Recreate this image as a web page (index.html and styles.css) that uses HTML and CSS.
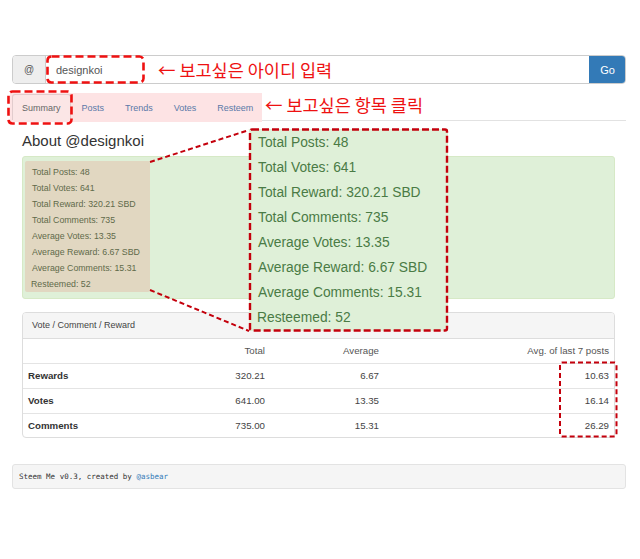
FILE: index.html
```html
<!DOCTYPE html>
<html>
<head>
<meta charset="utf-8">
<link rel="stylesheet" href="styles.css">
</head>
<body>
<div class="page">
  <div class="input-group">
    <span class="addon">@</span>
    <span class="field">designkoi</span>
    <button class="go">Go</button>
  </div>
  <nav class="nav">
    <div class="hl">
      <a class="tab active">Summary</a>
      <a class="tab">Posts</a>
      <a class="tab">Trends</a>
      <a class="tab">Votes</a>
      <a class="tab">Resteem</a>
    </div>
    <div class="rest"></div>
  </nav>
  <div class="inner">
    <h2 class="about">About @designkoi</h2>
    <div class="alert">
      <div class="stats">
        <div>Total Posts: 48</div>
        <div>Total Votes: 641</div>
        <div>Total Reward: 320.21 SBD</div>
        <div>Total Comments: 735</div>
        <div>Average Votes: 13.35</div>
        <div>Average Reward: 6.67 SBD</div>
        <div>Average Comments: 15.31</div>
        <div class="last">Resteemed: 52</div>
      </div>
    </div>
    <div class="panel">
      <div class="panel-heading">Vote / Comment / Reward</div>
      <table class="tbl">
        <colgroup><col class="c1"><col class="c2"><col class="c3"><col></colgroup>
        <thead>
          <tr><th></th><th>Total</th><th>Average</th><th>Avg. of last 7 posts</th></tr>
        </thead>
        <tbody>
          <tr><td class="lbl">Rewards</td><td>320.21</td><td>6.67</td><td>10.63</td></tr>
          <tr><td class="lbl">Votes</td><td>641.00</td><td>13.35</td><td>16.14</td></tr>
          <tr><td class="lbl">Comments</td><td>735.00</td><td>15.31</td><td>26.29</td></tr>
        </tbody>
      </table>
    </div>
  </div>
  <div class="footer">Steem Me v0.3, created by <a class="link">@asbear</a></div>
</div>

<div class="callout">
  <div>Total Posts: 48</div>
  <div>Total Votes: 641</div>
  <div>Total Reward: 320.21 SBD</div>
  <div>Total Comments: 735</div>
  <div>Average Votes: 13.35</div>
  <div>Average Reward: 6.67 SBD</div>
  <div>Average Comments: 15.31</div>
  <div class="cl-last">Resteemed: 52</div>
</div>

<div class="note note1">← 보고싶은 아이디 입력</div>
<div class="note note2">← 보고싶은 항목 클릭</div>

<svg class="overlay" width="640" height="559" viewBox="0 0 640 559">
  <g fill="none" stroke="#ee1111" stroke-width="2.6" stroke-dasharray="8 4">
    <rect x="47.5" y="56.5" width="96" height="26" rx="4"/>
    <rect x="8.5" y="91.5" width="63" height="32" rx="4"/>
  </g>
  <g fill="none" stroke="#c4000c" stroke-width="2.4" stroke-dasharray="7 3">
    <rect x="250" y="129.5" width="197" height="201" rx="2"/>
  </g>
  <g fill="none" stroke="#c4000c" stroke-width="2" stroke-dasharray="5 3">
    <rect x="560" y="362.5" width="56.5" height="74" rx="2"/>
    <line x1="150" y1="162" x2="249" y2="130"/>
    <line x1="150" y1="290" x2="249" y2="331"/>
  </g>
</svg>
</body>
</html>
```

FILE: styles.css
```css
* { box-sizing: border-box; }
html, body { margin: 0; padding: 0; background: #fff; }
body {
  position: relative;
  width: 640px;
  height: 559px;
  overflow: hidden;
  font-family: "Liberation Sans", Arial, sans-serif;
  color: #333;
}
.page {
  padding: 55px 14px 0 12px;
}
.input-group {
  display: flex;
  height: 29px;
  border: 1px solid #ccc;
  border-radius: 4px;
  overflow: hidden;
}
.addon {
  width: 33px;
  background: #eee;
  border-right: 1px solid #ccc;
  color: #555;
  font-size: 10px;
  display: flex;
  align-items: center;
  justify-content: center;
}
.field {
  flex: 1;
  display: flex;
  align-items: center;
  padding-left: 10px;
  font-size: 11px;
  color: #555;
}
.go {
  width: 37px;
  border: 0;
  margin: -1px -1px -1px 0;
  background: #337ab7;
  color: #fff;
  font-family: "Liberation Sans", Arial, sans-serif;
  font-size: 11px;
  padding: 0;
}
.nav {
  display: flex;
  margin-top: 9px;
  height: 29px;
}
.hl {
  display: flex;
  align-items: flex-end;
  background: #fde3e4;
  margin-left: -2px;
  padding: 2px 0 2px 2px;
  width: 252px;
}
.tab {
  display: flex;
  align-items: center;
  height: 26px;
  padding: 0 9px;
  margin-right: 1px;
  font-size: 9px;
  color: #5b79a8;
  border: 1px solid transparent;
  border-bottom: 0;
  border-radius: 3px 3px 0 0;
  white-space: nowrap;
}
.tab.active {
  color: #666;
  border-color: #e2cccd;
  background: #fbe6e6;
}
.rest {
  flex: 1;
  height: 28px;
  border-bottom: 1px solid #e2e2e2;
}
.inner {
  margin: 0 11px 0 10px;
}
.about {
  margin: 10px 0 6px;
  font-size: 15px;
  line-height: 18px;
  font-weight: normal;
  color: #333;
}
.alert {
  height: 143px;
  background: #dff0d8;
  border: 1px solid #d6e9c6;
  border-radius: 3px;
  padding: 4px 0 0 2px;
}
.stats {
  width: 125px;
  height: 131px;
  background: #e1d7c1;
  border-radius: 2px;
  padding: 3px 0 0 7px;
  font-size: 8.8px;
  line-height: 16px;
  color: #5f6a4a;
}
.stats .last { margin-left: -1px; }
.panel {
  margin-top: 13px;
  border: 1px solid #ddd;
  border-radius: 4px;
  overflow: hidden;
}
.panel-heading {
  height: 26px;
  background: #f5f5f5;
  border-bottom: 1px solid #ddd;
  padding-left: 9px;
  font-size: 9px;
  line-height: 25px;
  color: #444;
}
.tbl {
  width: 100%;
  border-collapse: collapse;
  table-layout: fixed;
  font-size: 9.7px;
}
.c1 { width: 118px; }
.c2 { width: 129px; }
.c3 { width: 114px; }
.tbl th, .tbl td {
  height: 25px;
  padding: 0 5px;
  text-align: right;
  vertical-align: middle;
  color: #444;
}
.tbl th { font-weight: normal; color: #555; height: 24px; }
.tbl tbody tr { border-top: 1px solid #e4e4e4; }
.tbl tbody tr:last-child td { height: 24px; }
.tbl td.lbl {
  text-align: left;
  font-weight: bold;
  color: #333;
}
.footer {
  margin-top: 26px;
  height: 25px;
  background: #f5f5f5;
  border: 1px solid #e3e3e3;
  border-radius: 3px;
  padding-left: 6px;
  font-family: "DejaVu Sans Mono", "Liberation Mono", monospace;
  font-size: 7.5px;
  line-height: 23px;
  color: #333;
}
.link { color: #337ab7; }
.callout {
  position: absolute;
  left: 249px;
  top: 129px;
  width: 199px;
  height: 202px;
  background: #dff0d8;
  padding: 1px 0 0 9px;
  font-size: 13.8px;
  line-height: 25px;
  color: #4a7b45;
  z-index: 1;
}
.callout .cl-last { margin-left: -1px; }
.note {
  position: absolute;
  font-family: "Noto Sans CJK KR", sans-serif;
  font-size: 17.5px;
  line-height: 22px;
  color: #ee1111;
  white-space: nowrap;
  z-index: 3;
}
.note1 { left: 158px; top: 59px; }
.note2 { left: 265px; top: 94px; }
.overlay {
  position: absolute;
  left: 0;
  top: 0;
  z-index: 2;
}
```
